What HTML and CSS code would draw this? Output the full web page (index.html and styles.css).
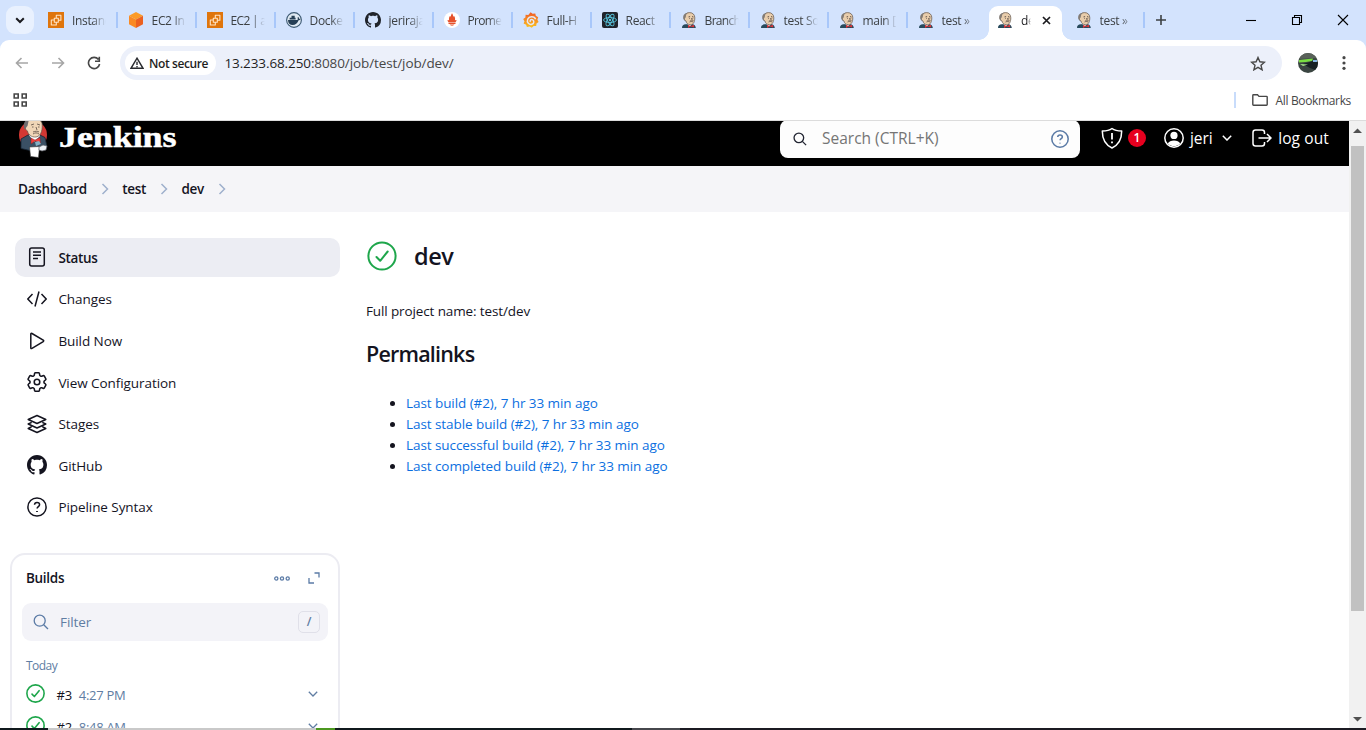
FILE: index.html
```html
<!DOCTYPE html>
<html lang="en">
<head>
<meta charset="utf-8">
<title>dev [test] - Jenkins</title>
<link rel="stylesheet" href="styles.css">
</head>
<body>
<svg class="defs" width="0" height="0">
  <symbol id="butler" viewBox="0 0 16 16">
    <path d="M1 16c0-2.6 1.4-3.4 3.6-3.7L11 12c2.3.5 3.6 1.600 3.800 4z" fill="#284a5c"/>
    <path d="M5.500 11l3 3.500L11.500 12l.3-1.500z" fill="#fff"/>
    <path d="M3.700 5.200C3.500 2.200 5.800.6 8.500.6c3.200 0 5.300 2 5.300 5.200 0 3.500-1 6.900-4.300 6.900-2.500 0-4.200-1.500-4.500-3.700-1.400-.2-2.200-2.600-1.300-3.800z" fill="#e9cdab" stroke="#5d5149" stroke-width=".7"/>
    <path d="M2.600 7.500C1.200 3.800 3.500.8 7 .7 5.200 1.800 4.800 3.200 4.700 5.500L3.800 6l.4 3.200z" fill="#827b75"/>
    <path d="M7.500 4.900l1.600-.4M11 4.500l1.500.5M8.200 6.300h.8M11.500 6.300h.7M10.600 6l.5 2M8.600 10c1.300-.8 2.600-.6 3.400 0" stroke="#51433c" stroke-width=".8" fill="none"/>
    <path d="M8.900 8.900c.9-.8 3.200-.8 4 .1" stroke="#897869" stroke-width=".9" fill="none"/>
    <path d="M7 13l2.800 1L13 12.700l.2 2.900-3.400-1L7 16z" fill="#d93438"/>
  </symbol>
  <symbol id="ec2" viewBox="0 0 16 16">
    <rect width="16" height="16" fill="#df750c"/>
    <path d="M6.300 6.300h4v4h-4z M8.300 6.300V3.200h4.600v5H10.300 M6.300 8H3.300v5h5v-2.700" fill="none" stroke="#ffe4c4" stroke-width="1.100" stroke-linejoin="round"/>
  </symbol>
  <symbol id="octocat" viewBox="0 0 16 16"><path d="M8 0C3.580 0 0 3.580 0 8c0 3.540 2.290 6.530 5.470 7.590.4.070.55-.17.55-.38 0-.19-.01-.82-.01-1.490-2.010.37-2.530-.49-2.690-.94-.09-.23-.48-.94-.82-1.130-.28-.15-.68-.52-.01-.53.63-.01 1.080.58 1.230.82.72 1.210 1.870.87 2.330.66.070-.52.280-.87.510-1.070-1.780-.2-3.640-.89-3.640-3.950 0-.87.31-1.590.82-2.150-.08-.2-.36-1.020.08-2.120 0 0 .67-.21 2.200.82.64-.18 1.320-.27 2-.27s1.360.09 2 .27c1.530-1.040 2.200-.82 2.200-.82.44 1.100.16 1.920.08 2.120.51.56.82 1.270.82 2.150 0 3.070-1.870 3.750-3.650 3.950.29.25.54.73.54 1.480 0 1.070-.01 1.930-.01 2.200 0 .21.15.46.55.38A8.010 8.010 0 0 0 16 8c0-4.420-3.580-8-8-8z"/></symbol>
  <symbol id="help" viewBox="0 0 20 20"><circle cx="10" cy="10" r="9.100"/><path d="M7.500 7.800C7.600 6.200 8.700 5.500 10 5.500c1.500 0 2.600.9 2.600 2.200 0 1.900-2.500 1.900-2.500 3.800"/><path d="M10 14.100v.8" stroke-width="1.800"/></symbol>
  <symbol id="ok" viewBox="0 0 30 30"><circle cx="15" cy="15" r="13.600"/><path d="M9.500 16l3.700 3.800 7.500-9.300" stroke-linejoin="round" stroke-linecap="round"/></symbol>
  <symbol id="down" viewBox="0 0 10 6"><path d="M.8.8L5 5 9.200.8"/></symbol>
  <symbol id="next" viewBox="0 0 8 12"><path d="M1.500 1l5 5-5 5"/></symbol>
  <symbol id="find" viewBox="0 0 16 16"><circle cx="6.700" cy="6.700" r="5.500"/><path d="M10.700 10.700l4.300 4.300"/></symbol>
</svg>

<div class="browser">
  <header class="tabstrip">
    <button class="tab-search" aria-label="Search tabs"><svg width="10" height="7" viewBox="0 0 10 7"><path d="M1.200 1.200L5 5l3.800-3.800" fill="none" stroke="#1b1b1f" stroke-width="2"/></svg></button>
    <nav class="tabs">
      <div class="tab"><svg class="fav"><use href="#ec2"/></svg><span>Instanc</span></div>
      <div class="tab"><svg class="fav" viewBox="0 0 16 16"><path d="M8 0l7 3.700L8 7.500 1 3.700z" fill="#fc9b27"/><path d="M1 3.700l7 3.800V16l-7-3.700z" fill="#fa8a23"/><path d="M15 3.700L8 7.500V16l7-3.700z" fill="#ec6120"/></svg><span>EC2 In</span></div>
      <div class="tab"><svg class="fav"><use href="#ec2"/></svg><span class="tight">EC2 | a</span></div>
      <div class="tab"><svg class="fav" viewBox="0 0 16 16"><circle cx="8" cy="8" r="7.400" fill="#dfe9f2" stroke="#3d5a73" stroke-width="1.100"/><path d="M2 8h9.500c.5-.9.300-1.700 0-2.200l.7-.7c.7.500.9 1.100.9 1.800.6-.2 1.100 0 1.500.2-.5 1-1.300 1.200-2 1.200-1.100 3.200-3.200 4.700-6 4.700C4 13 2 11.200 2 8zM3.600 5.800h6V7.600h-6zM5.500 3.800h3.200v2H5.500z" fill="#263f55"/></svg><span>Docke</span></div>
      <div class="tab"><svg class="fav" fill="#20242b"><use href="#octocat"/></svg><span>jeriraja</span></div>
      <div class="tab"><svg class="fav" viewBox="0 0 16 16"><circle cx="8" cy="8" r="8" fill="#fff"/><path d="M8 1.200c1.200 1.500.8 2.500 1.800 3.600l.4-.8c1.300 2 .9 3.500.7 4.300L12.500 8c0 1-.5 1.700-1 2.200h-7C3.900 9.600 3.600 8.900 3.500 8l1.600.3C4.700 6.800 5 5.300 5.900 4l.4.800C7.300 3.600 7 2.500 8 1.200zM4.500 10.800h7V12h-7zM5.700 12.600h4.600c-.3 1.500-4.200 1.500-4.600 0z" fill="#e6522c"/></svg><span class="tight">Prome</span></div>
      <div class="tab"><svg class="fav" viewBox="0 0 16 16"><defs><linearGradient id="gf" x2="0" y2="1"><stop stop-color="#f05a28"/><stop offset="1" stop-color="#fbc31d"/></linearGradient></defs><path d="M7.600.3l2 1.500 2.700-.4.500 2.400 2.400 1.500-.8 2.400 1.200 2.300-2.100 1.500-.3 2.500-2.600.1-1.800 1.600-2.200-1.200-2.700.5-.8-2.300L.6 11.500l.9-2.300L.2 6.900l2.200-1.400.2-2.700 2.700.1z" fill="url(#gf)"/><path d="M12.600 7.200C11.500 4 6.200 3.900 4.700 7.300c-1.300 3.200 1.500 5.800 4.200 5 2.500-.8 2.500-4 .3-4.700-1.600-.5-2.700 1.200-1.600 2.200" fill="none" stroke="#e5e9f4" stroke-width="1.500"/></svg><span>Full-H</span></div>
      <div class="tab"><svg class="fav" viewBox="0 0 16 16"><rect width="16" height="16" rx="2" fill="#20232a"/><g fill="none" stroke="#58c4dc" stroke-width=".9"><ellipse cx="8" cy="8" rx="6.500" ry="2.500"/><ellipse cx="8" cy="8" rx="6.500" ry="2.500" transform="rotate(60 8 8)"/><ellipse cx="8" cy="8" rx="6.500" ry="2.500" transform="rotate(120 8 8)"/></g><circle cx="8" cy="8" r="1.200" fill="#58c4dc"/></svg><span>React</span></div>
      <div class="tab"><svg class="fav"><use href="#butler"/></svg><span class="tight">Branch</span></div>
      <div class="tab"><svg class="fav"><use href="#butler"/></svg><span>test So</span></div>
      <div class="tab"><svg class="fav"><use href="#butler"/></svg><span>main [</span></div>
      <div class="tab before-active"><svg class="fav"><use href="#butler"/></svg><span>test »</span></div>
      <div class="tab active"><svg class="fav"><use href="#butler"/></svg><span>de</span><svg class="close" width="9" height="9" viewBox="0 0 9 9"><path d="M1 1l7 7M8 1L1 8" stroke="#1b1b1f" stroke-width="1.700"/></svg></div>
      <div class="tab"><svg class="fav"><use href="#butler"/></svg><span>test »</span></div>
    </nav>
    <svg class="new-tab" width="10" height="10" viewBox="0 0 10 10"><path d="M5 0v10M0 5h10" stroke="#3c4043" stroke-width="1.600"/></svg>
    <div class="window-buttons">
      <svg width="12" height="12" viewBox="0 0 12 12"><path d="M1 6.500h10"/></svg>
      <svg width="12" height="12" viewBox="0 0 12 12"><path d="M1.500 3.500h7v7h-7zM3.500 3.500v-2h7v7h-2"/></svg>
      <svg width="12" height="12" viewBox="0 0 12 12"><path d="M1 1l10 10M11 1L1 11"/></svg>
    </div>
  </header>

  <div class="toolbar">
    <svg width="14" height="12" viewBox="0 0 14 12" class="nav-icon muted"><path d="M13 6H1.500M6.500 1l-5 5 5 5"/></svg>
    <svg width="14" height="12" viewBox="0 0 14 12" class="nav-icon muted"><path d="M1 6h11.500M7.500 1l5 5-5 5"/></svg>
    <svg width="14" height="14" viewBox="0 0 14 14" class="nav-icon"><path d="M11.500 3.500A5.600 5.600 0 1 0 12.600 8M12.300.8v4.400H8"/></svg>
    <div class="omnibox">
      <div class="chip"><svg width="14" height="12" viewBox="0 0 14 12"><path d="M7 1.200L13 11.300H1zM7 4.700v3.200M7 9v1.300" fill="none" stroke="#2a2c30" stroke-width="1.400"/></svg><span>Not secure</span></div>
      <div class="url"><b>13.233.68.250</b>:8080/job/test/job/dev/</div>
      <svg class="star" width="16" height="15" viewBox="0 0 16 15"><path d="M8 1.500l1.900 4.300 4.600.4-3.500 3.100 1.100 4.500L8 11.400l-4.100 2.400L5 9.300 1.500 6.200l4.600-.4z" fill="none" stroke="#474747" stroke-width="1.400"/></svg>
    </div>
    <svg class="profile" width="20" height="20" viewBox="0 0 20 20"><clipPath id="pc"><circle cx="10" cy="10" r="10"/></clipPath><g clip-path="url(#pc)"><path fill="#3a4541" d="M0 0h20v20H0z"/><path fill="#596159" d="M0 0h20v5L0 6z"/><path fill="#78df42" d="M1 7l14-1.500L14 8l-6 1-7 .5z"/><path fill="#182124" d="M5 11l10-3 5 1v9l-8-3z"/><path fill="#a6e28c" d="M2 11l8 .5L5 13z"/><path fill="#85b7e5" d="M15 7h4v2h-4z"/></g></svg>
    <svg class="kebab" width="4" height="14" viewBox="0 0 4 14" fill="#474747"><circle cx="2" cy="1.700" r="1.600"/><circle cx="2" cy="7" r="1.600"/><circle cx="2" cy="12.300" r="1.600"/></svg>
  </div>

  <div class="bookmarks">
    <svg width="15" height="14" viewBox="0 0 15 14"><path d="M1.200 1h4v4h-4zM9.200 1h4v4h-4zM1.200 9h4v4h-4zM9.200 9h4v4h-4z" fill="none" stroke="#474747" stroke-width="1.600"/></svg>
    <div class="all-bookmarks"><svg width="16" height="12" viewBox="0 0 16 12"><path d="M.8 1.500q0-.7.7-.7h4l1.500 1.600h7.500q.7 0 .7.700v7.400q0 .7-.7.700h-13q-.7 0-.7-.7z" fill="none" stroke="#474747" stroke-width="1.400"/></svg><span>All Bookmarks</span></div>
  </div>

  <div class="viewport">
    <div class="page">
      <header class="page-header">
        <svg class="logo" width="29" height="37" viewBox="0 0 29 37">
          <circle cx="14" cy="14" r="14" fill="#d33833"/>
          <path d="M2 18l7-4 11-.5 6 3 2 9-4 3-13 1-9-2z" fill="#3a5064" stroke="#172532" stroke-width=".8"/>
          <path d="M10 14l5 7 6-6-1-3z" fill="#fff"/>
          <path d="M7 1C9-4 21-4 23 2c.7 5 0 13-6 14-5 .5-8-3-8.500-6C6 9 5.500 5 7 4z" fill="#f0d6b7" stroke="#62544b" stroke-width=".7"/>
          <path d="M6 9C3 4 6-2 10-2L8.500 5l-1 1z" fill="#6d6b6d"/>
          <path d="M12 4l3-1M18 3l3 1M13 6h1.500M19 6h1.500M17 6l1 3M14 13c2-1.500 4-1.500 6 0M14 11c2-1 5-1 6 0" fill="none" stroke="#594b43" stroke-width=".8"/>
          <path d="M12 17l4 2 5-2.500.5 6L16 20l-4 3z" fill="#ef3d3a" stroke="#7a1d1c" stroke-width=".4"/>
          <path d="M16 21l4-1 2 3-5 2z" fill="#81b0c4"/>
          <path d="M10.500 26l10-.5-1 11-8-1z" fill="#fff" stroke="#333" stroke-width=".6"/>
          <path d="M20 26l4-2 4 1-1 4-4 1-3-1z" fill="#edf1f5" stroke="#60636a" stroke-width=".7"/>
        </svg>
        <div class="brand"><span>Jenkins</span></div>
        <div class="search"><svg width="14" height="14" class="line"><use href="#find"/></svg><span>Search (CTRL+K)</span><svg width="18" height="18" class="line search-help"><use href="#help"/></svg></div>
        <div class="security">
          <svg width="22" height="22" viewBox="0 0 22 22" class="line"><path d="M11 1.500c2.500 1.800 6 2.500 9.700 2.600 0 8-2.500 13.600-9.700 16.900C3.800 17.700 1.300 12.100 1.300 4.100 5 4 8.500 3.300 11 1.500z" stroke-linejoin="round"/><path d="M11 6v6.500M11 14.500v1.800" stroke-width="1.800"/></svg>
          <span class="badge">1</span>
        </div>
        <div class="user"><svg width="20" height="20" viewBox="0 0 20 20"><circle cx="10" cy="10" r="9.200" fill="none" stroke="#fff" stroke-width="1.500"/><circle cx="10" cy="7.400" r="3.600" fill="#fff"/><path d="M3.800 15.500C5.500 11.500 14.500 11.500 16.200 15.500 13 19 7 19 3.800 15.500z" fill="#fff"/></svg><span>jeri</span><svg width="10" height="6" class="line chev"><use href="#down"/></svg></div>
        <div class="logout"><svg width="20" height="18" viewBox="0 0 20 18" class="line"><path d="M12.500 5V3.500q0-2.500-2.500-2.500H3.500Q1 1 1 3.500v11Q1 17 3.500 17H10q2.500 0 2.500-2.500V13M6.500 9H19M15 5l4 4-4 4"/></svg><span>log out</span></div>
      </header>

      <nav class="crumbs"><span>Dashboard</span><svg><use href="#next"/></svg><span>test</span><svg><use href="#next"/></svg><span>dev</span><svg><use href="#next"/></svg></nav>

      <div class="body">
        <aside class="side">
          <nav class="tasks">
            <a class="task current"><svg viewBox="0 0 20 20"><rect x="2.700" y=".9" width="14.600" height="18.200" rx="2"/><path d="M6 5h8M6 8.200h8M6 11.400h5"/></svg><span>Status</span></a>
            <a class="task"><svg viewBox="0 0 20 20"><path d="M5.500 5L.8 10l4.700 5M14.500 5l4.700 5-4.700 5M12 2.500L8 17.500"/></svg><span>Changes</span></a>
            <a class="task"><svg viewBox="0 0 20 20"><path d="M3.800 3.200q0-1.300 1.200-.7l11.200 6.600q1 .7 0 1.500L5 17.400q-1.200.6-1.200-.7z"/></svg><span>Build Now</span></a>
            <a class="task"><svg viewBox="2.300 2.300 19.400 19.400"><path d="M9.594 3.940c.09-.542.56-.94 1.110-.94h2.593c.55 0 1.020.398 1.110.94l.213 1.281c.063.374.313.686.645.870.074.040.147.083.220.127.325.196.720.257 1.075.124l1.217-.456a1.125 1.125 0 0 1 1.370.490l1.296 2.247a1.125 1.125 0 0 1-.260 1.431l-1.003.827c-.293.241-.438.613-.430.992a7.723 7.723 0 0 1 0 .255c-.008.378.137.750.430.991l1.004.827c.424.350.534.955.260 1.430l-1.298 2.247a1.125 1.125 0 0 1-1.369.491l-1.217-.456c-.355-.133-.750-.072-1.076.124a6.470 6.470 0 0 1-.220.128c-.331.183-.581.495-.644.869l-.213 1.281c-.090.543-.560.940-1.110.940h-2.594c-.550 0-1.019-.398-1.110-.940l-.213-1.281c-.062-.374-.312-.686-.644-.870a6.520 6.520 0 0 1-.220-.127c-.325-.196-.720-.257-1.076-.124l-1.217.456a1.125 1.125 0 0 1-1.369-.490l-1.297-2.247a1.125 1.125 0 0 1 .260-1.431l1.004-.827c.292-.240.437-.613.430-.991a6.932 6.932 0 0 1 0-.255c.007-.380-.138-.751-.430-.992l-1.004-.827a1.125 1.125 0 0 1-.260-1.430l1.297-2.247a1.125 1.125 0 0 1 1.370-.491l1.216.456c.356.133.751.072 1.076-.124.072-.044.146-.086.220-.128.332-.183.582-.495.644-.869z"/><circle cx="12" cy="12" r="2.700"/></svg><span>View Configuration</span></a>
            <a class="task"><svg viewBox="0 0 20 20"><path d="M10 1.500l8.800 4-8.800 4-8.800-4zM4.700 8.300L1.200 10l8.800 4 8.800-4-3.500-1.700M4.700 12.700l-3.500 1.800 8.800 4 8.800-4-3.500-1.800" stroke-linejoin="round"/></svg><span>Stages</span></a>
            <a class="task"><svg class="solid"><use href="#octocat"/></svg><span>GitHub</span></a>
            <a class="task"><svg><use href="#help"/></svg><span>Pipeline Syntax</span></a>
          </nav>
          <section class="builds">
            <div class="builds-head"><h2>Builds</h2><svg width="16" height="5" viewBox="0 0 16 5"><circle cx="2.300" cy="2.500" r="1.600"/><circle cx="8" cy="2.500" r="1.600"/><circle cx="13.700" cy="2.500" r="1.600"/></svg><svg width="12" height="12" viewBox="0 0 12 12"><path d="M6.500 1H11v4.500M1 6v5h5"/></svg></div>
            <div class="filter"><svg width="16" height="16"><use href="#find"/></svg><span>Filter</span><kbd>/</kbd></div>
            <div class="day">Today</div>
            <div class="build"><svg class="okay"><use href="#ok"/></svg><b>#3</b><span>4:27 PM</span><svg class="more"><use href="#down"/></svg></div>
            <div class="build"><svg class="okay"><use href="#ok"/></svg><b>#2</b><span>8:48 AM</span><svg class="more"><use href="#down"/></svg></div>
          </section>
        </aside>

        <main class="main">
          <h1><svg class="status"><use href="#ok"/></svg><span>dev</span></h1>
          <p class="full-name"><span>Full project name: test/dev</span></p>
          <h2>Permalinks</h2>
          <ul>
            <li><a>Last build (#2), 7 hr 33 min ago</a></li>
            <li><a>Last stable build (#2), 7 hr 33 min ago</a></li>
            <li><a>Last successful build (#2), 7 hr 33 min ago</a></li>
            <li><a>Last completed build (#2), 7 hr 33 min ago</a></li>
          </ul>
        </main>
      </div>
    </div>
    <div class="scrollbar">
      <svg width="9" height="5" viewBox="0 0 9 5"><path d="M0 5L4.500.5 9 5z"/></svg>
      <div class="thumb"></div>
      <svg width="9" height="5" viewBox="0 0 9 5"><path d="M0 0l4.500 4.500L9 0z"/></svg>
    </div>
  </div>
  <div class="taskbar"></div>
</div>
</body>
</html>
```
FILE: styles.css
```css
* { box-sizing: border-box; }
body { margin: 0; font-family: "Open Sans", "Noto Sans", sans-serif; font-size: 13.5px; letter-spacing: -.07px; color: #14141f; background: #fff; }
h1, h2, p, ul { margin: 0; padding: 0; }
svg { flex: none; display: block; }
span { white-space: nowrap; }
.defs { position: absolute; }
.line { fill: none; stroke: currentColor; stroke-width: 1.5; }

.browser { width: 1366px; height: 730px; overflow: hidden; display: flex; flex-direction: column; background: #d3e3fd; }

/* Tab strip */
.tabstrip { height: 40px; display: flex; align-items: center; padding-left: 6px; flex: none; }
.tab-search { width: 28px; height: 28px; border: 0; border-radius: 9px; background: #e9f1fe; display: flex; align-items: center; justify-content: center; padding: 0; }
.tabs { display: flex; margin-left: 5px; height: 40px; }
.tab { width: 79px; height: 40px; display: flex; align-items: center; padding-left: 9px; position: relative; font-size: 12px; color: #3c4043; }
.tab:nth-child(n+2) { padding-left: 9.6px; }
.tab span { width: 34px; margin-left: 8px; padding-top: 2px; letter-spacing: -.35px; line-height: 20px; -webkit-mask-image: linear-gradient(90deg, #000 60%, transparent); mask-image: linear-gradient(90deg, #000 60%, transparent); }
.tab .tight { letter-spacing: -.7px; }
.tab::after { content: ""; position: absolute; right: 0; top: 12px; width: 2px; height: 16px; background: #a8c7fa; }
.fav { width: 16px; height: 16px; }
.tab.before-active::after { display: none; }
.tab.active { color: #1b1b1f; padding-left: 10px; z-index: 0; }
.tab.active span { width: 10px; }
.active .close { margin-left: 11px; }
.active::before { content: ""; position: absolute; z-index: -1; left: 2px; width: 73px; top: 6px; bottom: 0; background: #fff; border-radius: 9px 9px 0 0; }
.active::after { z-index: -1; left: -8px; right: auto; top: 30px; width: 93px; height: 10px; background: radial-gradient(circle at 0 0, transparent 9.5px, #fff 10px) 0 0 / 10px 10px no-repeat, radial-gradient(circle at 100% 0, transparent 9.5px, #fff 10px) 100% 0 / 10px 10px no-repeat; }
.new-tab { margin-left: 11px; }
.window-buttons { display: flex; gap: 34px; margin-left: auto; margin-right: 17px; fill: none; stroke: #000; stroke-width: 1.1; }

/* Toolbar */
.toolbar { height: 46px; background: #fff; border-radius: 9px 9px 0 0; display: flex; align-items: center; padding-left: 15px; flex: none; }
.nav-icon { fill: none; stroke: #474747; stroke-width: 1.6; margin-right: 22px; }
.muted { stroke: #a6a6a6; }
.omnibox { width: 1162px; height: 34px; margin-left: -3px; border-radius: 17px; background: #ecf0fa; display: flex; align-items: center; padding-left: 5px; }
.chip { width: 91px; height: 24px; background: #fff; border-radius: 12px; display: flex; align-items: center; padding-left: 5px; gap: 5px; color: #1f1f1f; font-size: 12px; font-weight: 600; letter-spacing: -.4px; }
.url { margin-left: 8.4px; font-size: 13.5px; color: #474747; letter-spacing: -.1px; }
.url b { font-weight: 400; color: #1f1f1f; }
.star { margin-left: auto; margin-right: 16px; }
.profile { margin-left: 16px; }
.kebab { margin-left: 24px; }
.bookmarks { height: 35px; background: #fff; border-bottom: 1px solid #dcdcdc; display: flex; align-items: center; padding: 0 15px 6px 13px; flex: none; justify-content: space-between; }
.all-bookmarks { display: flex; align-items: center; gap: 8px; height: 16px; padding-left: 16px; border-left: 2px solid #c8dcfb; color: #474747; font-size: 12px; letter-spacing: -.35px; }

/* Page viewport */
.viewport { flex: 1; min-height: 0; display: flex; background: #fff; }
.page { flex: 1; overflow: hidden; }
.page-header { height: 45px; background: #000; color: #fff; display: flex; align-items: center; padding: 0 20px 10px 19px; overflow: hidden; font-size: 15.5px; }
.logo { align-self: flex-start; }
.brand { width: 117px; margin-left: 11px; font: bold 30px/30px "Liberation Serif", serif; }
.brand span { display: inline-block; transform: translateY(-2.5px) scaleX(1.2); transform-origin: 0 50%; -webkit-text-stroke: .5px #fff; }
.search { width: 300px; height: 38px; border-radius: 8px; background: #fdfdfd; display: flex; align-items: center; margin-left: 604px; padding: 0 11px 0 13px; color: #757575; }
.search .line { color: #222532; }
.search span { margin-left: 15px; padding-bottom: 1px; font-size: 15.5px; letter-spacing: 0; }
.search .search-help { margin-left: auto; color: #5b7ba6; stroke-width: 1.7; }
.security { display: flex; align-items: center; gap: 5px; margin-left: 21px; }
.security, .user, .logout { padding-bottom: 1px; }
.badge { width: 18px; height: 18px; border-radius: 9px; background: #e6001f; font-size: 12px; font-weight: 600; line-height: 18px; text-align: center; }
.user { display: flex; align-items: center; margin-left: 18px; gap: 6px; }
.chev { margin-left: 3px; }
.logout { display: flex; align-items: center; gap: 6px; margin-left: auto; }
.logout span { letter-spacing: .12px; }

.crumbs { height: 46px; background: #f5f5f8; display: flex; align-items: center; padding-left: 18px; font-weight: 600; letter-spacing: -.3px; }
.crumbs svg { width: 8px; height: 12px; fill: none; stroke: #9fb0cc; stroke-width: 1.5; margin: 0 13.4px 0 14px; }

.body { display: flex; }
.side { width: 340px; padding: 26px 0 0 10px; flex: none; }
.tasks { display: flex; flex-direction: column; gap: 2.6px; padding-left: 5px; }
.task { height: 39px; border-radius: 10px; display: flex; align-items: center; padding-left: 12px; gap: 11.4px; line-height: 21px; }
.task span { padding-top: 1.6px; }
.task svg { width: 20px; height: 20px; fill: none; stroke: #14141f; stroke-width: 1.5; }
.task .solid { fill: #14141f; stroke: none; }
.task.current { background: #ecedf3; font-weight: 600; letter-spacing: -.35px; }
.task.current svg { margin-top: -1px; }
.builds { margin-top: 26px; height: 260px; border: 2px solid #ececf2; border-radius: 15px; padding: 0 10px; }
.builds-head { height: 48px; display: flex; align-items: center; padding: 0 8px 1px 4px; gap: 18px; fill: none; stroke: #5b7ba6; stroke-width: 1.3; }
.builds-head h2 { font-size: 13.5px; font-weight: 600; margin-right: auto; letter-spacing: -.3px; }
.filter { height: 38px; border-radius: 9px; background: #f3f3f8; display: flex; align-items: center; padding: 0 8px 0 11px; color: #607da3; }
.filter svg { fill: none; stroke: #5b7ba6; stroke-width: 1.3; }
.filter span { margin-left: 11px; }
kbd { margin-left: auto; width: 22px; height: 22px; border: 1px solid #e0e0e9; border-radius: 5px; font: 600 12px/20px "Open Sans", sans-serif; text-align: center; }
.day { font-size: 12px; color: #607da3; line-height: 16px; margin: 17px 0 0 4px; letter-spacing: -.55px; }
.build { height: 32px; display: flex; align-items: center; padding: 0 10px 0 4px; font-size: 13px; letter-spacing: -.3px; }
.day + .build { margin-top: 4px; }
.build b { font-weight: 400; margin-left: 11.6px; padding-top: 2px; }
.build span { margin-left: 7px; padding-top: 2px; color: #607da3; }
.okay { width: 19px; height: 19px; fill: none; stroke: #1ea64b; stroke-width: 2.5; }
.more { width: 10px; height: 6px; margin-left: auto; fill: none; stroke: #607da3; stroke-width: 1.3; }

.main { padding: 28px 0 0 26px; }
.main h1 { display: flex; align-items: center; height: 32px; gap: 16px; font-size: 23.5px; font-weight: 600; letter-spacing: -.4px; }
.status { width: 32px; height: 30px; fill: none; stroke: #1ea64b; stroke-width: 2; }
.full-name { margin-top: 29px; line-height: 21px; letter-spacing: -.12px; }
.main h2 { margin-top: 15px; font-size: 21.5px; line-height: 34px; font-weight: 600; letter-spacing: -.8px; }
.main ul { margin-top: 22px; padding-left: 40px; line-height: 21px; }
.main a { color: #0b6fdf; }

/* Classic window scrollbar */
.scrollbar { width: 17px; background: #f1f1f1; display: flex; flex-direction: column; align-items: center; padding: 7px 0 6px; fill: #505050; }
.thumb { width: 13px; height: 465px; background: #c1c1c1; margin: 13px 0 auto; }
.taskbar { flex: none; height: 2px; background: linear-gradient(90deg, #10191d 48px, #c9c9c9 48px 316px, #4c9820 316px 335px, #10191d 335px 632px, #46474c 632px 680px, #1b1a22 680px); }
```
